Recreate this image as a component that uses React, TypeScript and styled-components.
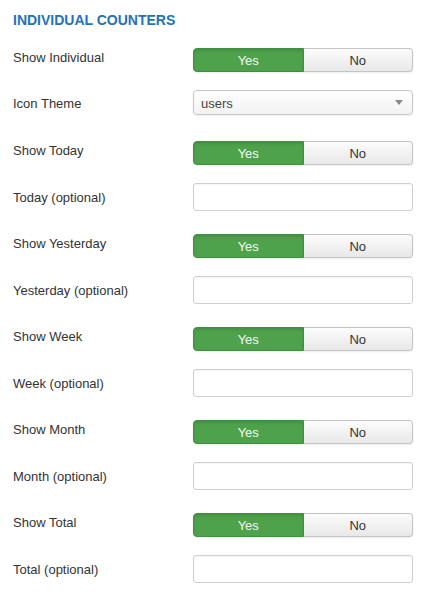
import React from 'react';
import styled, { createGlobalStyle } from 'styled-components';

const GlobalStyle = createGlobalStyle`
  body {
    margin: 0;
    background: #fff;
    font-family: "Liberation Sans", Arial, sans-serif;
    color: #333;
  }
`;

const Page = styled.div`
  padding: 10px 13px 0;
`;

const Title = styled.h3`
  margin: 0 0 18px;
  font-size: 14px;
  line-height: 20px;
  font-weight: bold;
  color: #1f73b7;
  text-transform: uppercase;
`;

const Row = styled.div<{ $gap: number }>`
  display: grid;
  grid-template-columns: 180px 220px;
  align-items: start;
  margin-bottom: ${(p) => p.$gap}px;
`;

const Label = styled.label<{ $offset: number }>`
  font-size: 13px;
  line-height: 18px;
  padding-top: ${(p) => p.$offset}px;
  color: #333;
`;

const Toggle = styled.div`
  display: flex;
  height: 24px;
  border-radius: 4px;
  box-shadow: 0 1px 2px rgba(0, 0, 0, 0.08);
`;

const ToggleButton = styled.button<{ $active: boolean }>`
  flex: 1;
  margin: 0;
  padding: 1px 0 0;
  font-family: inherit;
  font-size: 13px;
  line-height: 21px;
  cursor: pointer;
  border: 1px solid ${(p) => (p.$active ? '#3e8f3e' : '#c4c4c4')};
  background: ${(p) =>
    p.$active ? '#4fa24c' : 'linear-gradient(#fcfcfc, #e8e8e8)'};
  color: ${(p) => (p.$active ? '#f4fbf4' : '#333')};
  box-shadow: ${(p) =>
    p.$active ? 'inset 0 2px 3px rgba(0, 0, 0, 0.12)' : 'none'};

  &:first-child {
    border-radius: 4px 0 0 4px;
  }
  &:last-child {
    border-radius: 0 4px 4px 0;
    border-left: none;
  }
`;

const SelectBox = styled.div`
  position: relative;
  height: 25px;
  box-sizing: border-box;
  border: 1px solid #c8c8c8;
  border-radius: 4px;
  background: linear-gradient(#ffffff, #f2f2f2);
  box-shadow: 0 1px 2px rgba(0, 0, 0, 0.08);
  font-size: 13px;
  line-height: 23px;
  padding: 1px 0 0 7px;
  color: #444;
`;

const Arrow = styled.span`
  position: absolute;
  right: 9px;
  top: 9px;
  width: 0;
  height: 0;
  border-left: 4px solid transparent;
  border-right: 4px solid transparent;
  border-top: 5px solid #8a8a8a;
`;

const TextInput = styled.input`
  display: block;
  width: 220px;
  height: 28px;
  box-sizing: border-box;
  margin: 0;
  border: 1px solid #cfcfcf;
  border-radius: 3px;
  box-shadow: inset 0 1px 1px rgba(0, 0, 0, 0.04);
  font-family: inherit;
  font-size: 13px;
  padding: 4px 6px;
  outline: none;
`;

type Field =
  | { kind: 'toggle'; label: string }
  | { kind: 'select'; label: string; value: string }
  | { kind: 'text'; label: string };

const fields: Field[] = [
  { kind: 'toggle', label: 'Show Individual' },
  { kind: 'select', label: 'Icon Theme', value: 'users' },
  { kind: 'toggle', label: 'Show Today' },
  { kind: 'text', label: 'Today (optional)' },
  { kind: 'toggle', label: 'Show Yesterday' },
  { kind: 'text', label: 'Yesterday (optional)' },
  { kind: 'toggle', label: 'Show Week' },
  { kind: 'text', label: 'Week (optional)' },
  { kind: 'toggle', label: 'Show Month' },
  { kind: 'text', label: 'Month (optional)' },
  { kind: 'toggle', label: 'Show Total' },
  { kind: 'text', label: 'Total (optional)' },
];

const App = () => (
  <Page>
    <GlobalStyle />
    <Title>Individual Counters</Title>
    {fields.map((f, i) => {
      if (f.kind === 'toggle') {
        return (
          <Row key={i} $gap={18}>
            <Label $offset={1}>{f.label}</Label>
            <Toggle>
              <ToggleButton $active>Yes</ToggleButton>
              <ToggleButton $active={false}>No</ToggleButton>
            </Toggle>
          </Row>
        );
      }
      if (f.kind === 'select') {
        return (
          <Row key={i} $gap={26}>
            <Label $offset={5}>{f.label}</Label>
            <SelectBox>
              {f.value}
              <Arrow />
            </SelectBox>
          </Row>
        );
      }
      return (
        <Row key={i} $gap={23}>
          <Label $offset={6}>{f.label}</Label>
          <TextInput type="text" />
        </Row>
      );
    })}
  </Page>
);

export default App;
